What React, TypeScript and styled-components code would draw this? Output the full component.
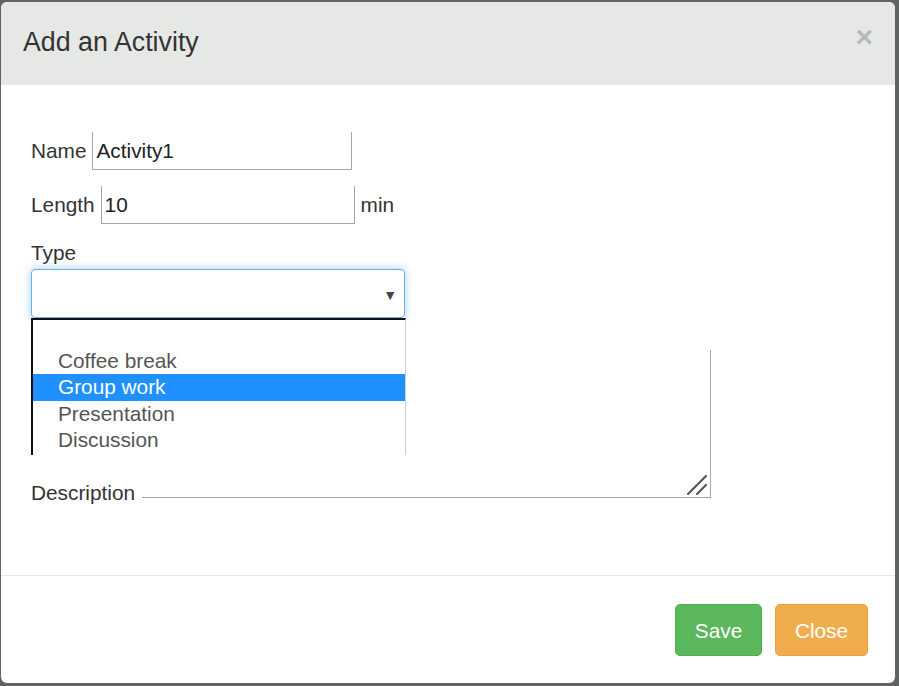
import React from "react";
import styled, { createGlobalStyle } from "styled-components";

const Global = createGlobalStyle`
  html, body {
    margin: 0;
    padding: 0;
    background: #606462;
    width: 899px;
    height: 686px;
    overflow: hidden;
  }
  * { box-sizing: border-box; }
`;

const Modal = styled.div`
  margin: 2px 4px 0 1px;
  width: 894px;
  height: 681px;
  background: #fff;
  border-radius: 6px;
  overflow: hidden;
  display: flex;
  flex-direction: column;
  font-family: "Liberation Sans", Arial, sans-serif;
  color: #333;
`;

const Header = styled.div`
  height: 83px;
  background: #e6e8e6;
  display: flex;
  align-items: center;
  justify-content: space-between;
  padding: 0 22px 0 22px;
`;

const Title = styled.h4`
  margin: 0;
  font-size: 26.8px;
  font-weight: normal;
  color: #333;
  margin-top: -2px;
`;

const CloseX = styled.span`
  font-size: 30px;
  font-weight: bold;
  color: #b8b9b8;
  line-height: 1;
  margin-top: -14px;
`;

const Body = styled.div`
  position: relative;
  padding: 47px 30px 70px 30px;
  display: flex;
  flex-direction: column;
  font-size: 20.8px;
`;

const Row = styled.div<{ $mt?: number }>`
  display: flex;
  align-items: center;
  gap: 6px;
  height: 38px;
  margin-top: ${(p) => p.$mt ?? 0}px;
`;

const Label = styled.span`
  color: #333;
  line-height: 24px;
`;

const TextInput = styled.div<{ $w: number }>`
  width: ${(p) => p.$w}px;
  height: 38px;
  border: 1px solid #a6a6a6;
  border-top: none;
  display: flex;
  align-items: center;
  padding-left: 3px;
  color: #222;
`;

const BlockLabel = styled.div`
  margin-top: 17px;
  line-height: 24px;
  color: #333;
`;

const SelectBox = styled.div`
  margin-top: 4px;
  width: 374px;
  height: 49px;
  border: 1px solid #66afe9;
  border-radius: 4px;
  box-shadow: 0 0 8px rgba(102, 175, 233, 0.6);
  display: flex;
  align-items: center;
  justify-content: flex-end;
  padding-right: 7px;
`;

const Arrow = styled.span`
  font-size: 14px;
  color: #444;
  margin-top: 2px;
`;

const DescRow = styled.div`
  margin-top: 32px;
  display: flex;
  align-items: flex-end;
  gap: 7px;
`;

const TextArea = styled.div`
  position: relative;
  width: 569px;
  height: 148px;
  margin-bottom: 7px;
  border-right: 1px solid #a6a6a6;
  border-bottom: 1px solid #a6a6a6;
`;

const Grip = styled.svg`
  position: absolute;
  right: 3px;
  bottom: 2px;
`;

const ListBox = styled.div`
  position: absolute;
  left: 30px;
  top: 233px;
  width: 375px;
  height: 137px;
  background: #fff;
  border-top: 2px solid #111;
  border-left: 2px solid #111;
  border-right: 1px solid #cfcfcf;
  padding-top: 1px;
  overflow: hidden;
`;

const Option = styled.div<{ $sel?: boolean }>`
  height: 26.6px;
  line-height: 26.6px;
  padding-left: 25px;
  font-size: 20.8px;
  color: ${(p) => (p.$sel ? "#fff" : "#555")};
  background: ${(p) => (p.$sel ? "#1e90ff" : "transparent")};
`;

const Footer = styled.div`
  border-top: 1px solid #e5e5e5;
  padding: 28px 27px 27px 0;
  display: flex;
  justify-content: flex-end;
  gap: 13px;
`;

const Button = styled.button<{ $bg: string; $bd: string; $w: number }>`
  width: ${(p) => p.$w}px;
  height: 52px;
  border-radius: 5px;
  border: 1px solid ${(p) => p.$bd};
  background: ${(p) => p.$bg};
  color: #fff;
  font-family: "Liberation Sans", Arial, sans-serif;
  font-size: 20.8px;
  padding: 2px 0 0;
`;

export default function App() {
  return (
    <>
      <Global />
      <Modal>
        <Header>
          <Title>Add an Activity</Title>
          <CloseX>×</CloseX>
        </Header>
        <Body>
          <Row>
            <Label>Name</Label>
            <TextInput $w={260}>Activity1</TextInput>
          </Row>
          <Row $mt={16}>
            <Label>Length</Label>
            <TextInput $w={254}>10</TextInput>
            <Label>min</Label>
          </Row>
          <BlockLabel>Type</BlockLabel>
          <SelectBox>
            <Arrow>▼</Arrow>
          </SelectBox>
          <DescRow>
            <Label>Description</Label>
            <TextArea>
              <Grip width="20" height="20" viewBox="0 0 20 20">
                <line x1="1" y1="19" x2="19" y2="1" stroke="#555" strokeWidth="2.2" strokeLinecap="round" />
                <line x1="10" y1="19" x2="19" y2="10" stroke="#555" strokeWidth="2.2" strokeLinecap="round" />
              </Grip>
            </TextArea>
          </DescRow>
          <ListBox>
            <Option>&nbsp;</Option>
            <Option>Coffee break</Option>
            <Option $sel>Group work</Option>
            <Option>Presentation</Option>
            <Option>Discussion</Option>
          </ListBox>
        </Body>
        <Footer>
          <Button $bg="#5cb85c" $bd="#4cae4c" $w={87}>Save</Button>
          <Button $bg="#f0ad4e" $bd="#eea236" $w={93}>Close</Button>
        </Footer>
      </Modal>
    </>
  );
}
